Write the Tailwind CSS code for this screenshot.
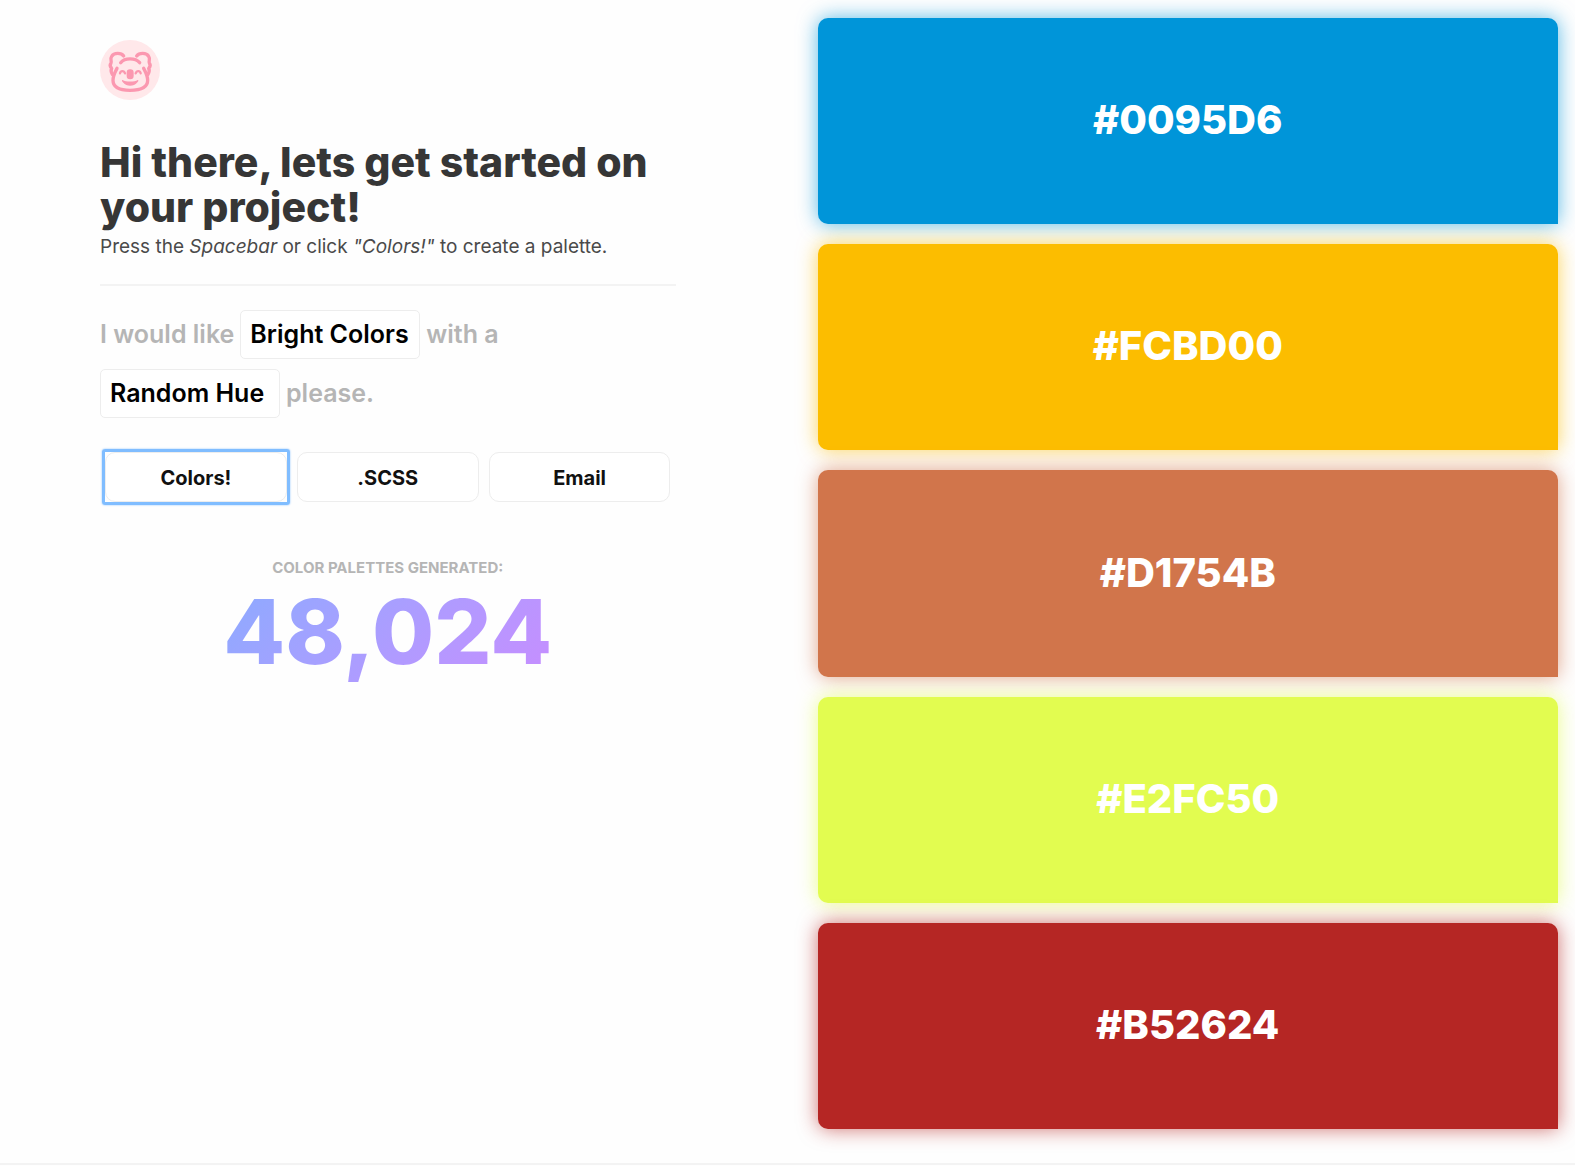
<!DOCTYPE html>
<html lang="en">
  <head>
    <meta charset="utf-8" />
    <meta name="viewport" content="width=device-width, initial-scale=1" />
    <title>Color Palettes</title>
    <script src="https://cdn.jsdelivr.net/npm/@tailwindcss/browser@4"></script>
  </head>
  <body
    class="min-h-screen flex flex-col bg-[#fefefe] text-[#363636] font-['Inter',sans-serif]"
  >
    <main class="flex-1 grid grid-cols-2">
      <section class="pl-[100px] pr-[112px] pt-10">
        <svg class="block size-[60px]" viewBox="30 30 180 180" fill="none" role="img" aria-label="Koala">
          <circle cx="120" cy="120" r="90" fill="#ffe8ea" />
          <g stroke="#fb98b0" stroke-width="10" stroke-linecap="round" stroke-linejoin="round">
            <path d="M92 98C104 83 136 83 149 98" />
            <path d="M101 78C94 68 72 67 65 79C59 88 66 93 63 99C58 106 61 111 65 115C61 122 64 128 67 133" />
            <path d="M140 78C147 68 169 67 176 79C182 88 175 93 178 99C183 106 180 111 176 115C180 122 177 128 174 133" />
            <path d="M81 115C75 126 69 138 69 151C69 172 86 181 120 181C155 181 173 172 173 151C173 138 167 126 161 115" />
            <path d="M90 130C92 121 102 121 105 130M137 130C140 121 150 121 152 130" stroke-width="7" />
          </g>
          <rect x="110" y="118" width="21" height="30" rx="10" fill="#fb98b0" />
          <path d="M98 150C107 156 134 156 143 150C147 150 145 155 141 158C132 170 109 170 100 158C96 155 94 150 98 150Z" fill="#fb98b0" />
        </svg>

        <h1 class="mt-10 text-[41px] leading-[45px] font-extrabold">
          Hi there, lets get started on your project!
        </h1>
        <p class="text-[19px] leading-[34px] text-[#4a4a4a]">
          Press the <em>Spacebar</em> or click <em>"Colors!"</em> to create a palette.
        </p>

        <hr class="mt-5 border-t-2 border-[#f3f3f3]" />

        <form class="mt-6 text-[25px] font-semibold text-[#b5b5b5]">
          <div class="flex items-center gap-[6px]">
            <label for="luminosity">I would like</label>
            <select
              id="luminosity"
              class="appearance-none w-[180px] h-[49px] pl-[9px] border border-[#ededed] rounded-[5px] bg-white text-black"
            >
              <option>Bright Colors</option>
              <option>Light Colors</option>
              <option>Dark Colors</option>
            </select>
            <span>with a</span>
          </div>
          <div class="mt-[10px] flex items-center gap-[6px]">
            <select
              id="hue"
              class="appearance-none w-[180px] h-[49px] pl-[9px] border border-[#ededed] rounded-[5px] bg-white text-black"
            >
              <option>Random Hue</option>
              <option>Red Hue</option>
              <option>Blue Hue</option>
            </select>
            <label for="hue">please.</label>
          </div>
        </form>

        <div class="mt-[34px] px-[5px] grid grid-cols-3 gap-[10px] text-xl font-bold text-[#111111]">
          <!-- the focus ring keeps square corners, so it is drawn apart from the rounded border -->
          <button type="button" class="relative h-[50px] pt-[2px] border border-[#ededed] rounded-[10px] bg-white before:absolute before:-inset-1 before:border-3 before:border-[#80bdff] before:rounded-[3px] before:shadow-[0_0_2px_#80bdff]">Colors!</button>
          <button type="button" class="h-[50px] pt-[2px] border border-[#ededed] rounded-[10px] bg-white">.SCSS</button>
          <button type="button" class="h-[50px] pt-[2px] border border-[#ededed] rounded-[10px] bg-white">Email</button>
        </div>

        <div class="mt-[54px] text-center">
          <h2 class="text-[15px] leading-6 font-bold text-[#b5b5b5]">COLOR PALETTES GENERATED:</h2>
          <p class="inline-block text-[90px] leading-[104px] font-extrabold text-transparent bg-clip-text bg-linear-135 from-[#8aabff] to-[#c78dff]">48,024</p>
        </div>
      </section>

      <section class="pl-[30px] pr-[17px] pt-[18px] pb-[34px] flex flex-col gap-5 text-[40px] font-extrabold text-white">
        <div class="flex-1 flex items-center justify-center pb-[2px] rounded-[10px] rounded-br-none bg-[#0095d9] shadow-[0_0_20px_#0095d9a6]">#0095D6</div>
        <div class="flex-1 flex items-center justify-center pb-[2px] rounded-[10px] rounded-br-none bg-[#fcbd00] shadow-[0_0_20px_#fcbd00a6]">#FCBD00</div>
        <div class="flex-1 flex items-center justify-center pb-[2px] rounded-[10px] rounded-br-none bg-[#d1754b] shadow-[0_0_20px_#d1754ba6]">#D1754B</div>
        <div class="flex-1 flex items-center justify-center pb-[2px] rounded-[10px] rounded-br-none bg-[#e2fc50] shadow-[0_0_20px_#e2fc50a6]">#E2FC50</div>
        <div class="flex-1 flex items-center justify-center pb-[2px] rounded-[10px] rounded-br-none bg-[#b52624] shadow-[0_0_20px_#b52624a6]">#B52624</div>
      </section>
    </main>
    <footer class="h-[3px] border-t-2 border-[#f3f3f3]"></footer>
  </body>
</html>
